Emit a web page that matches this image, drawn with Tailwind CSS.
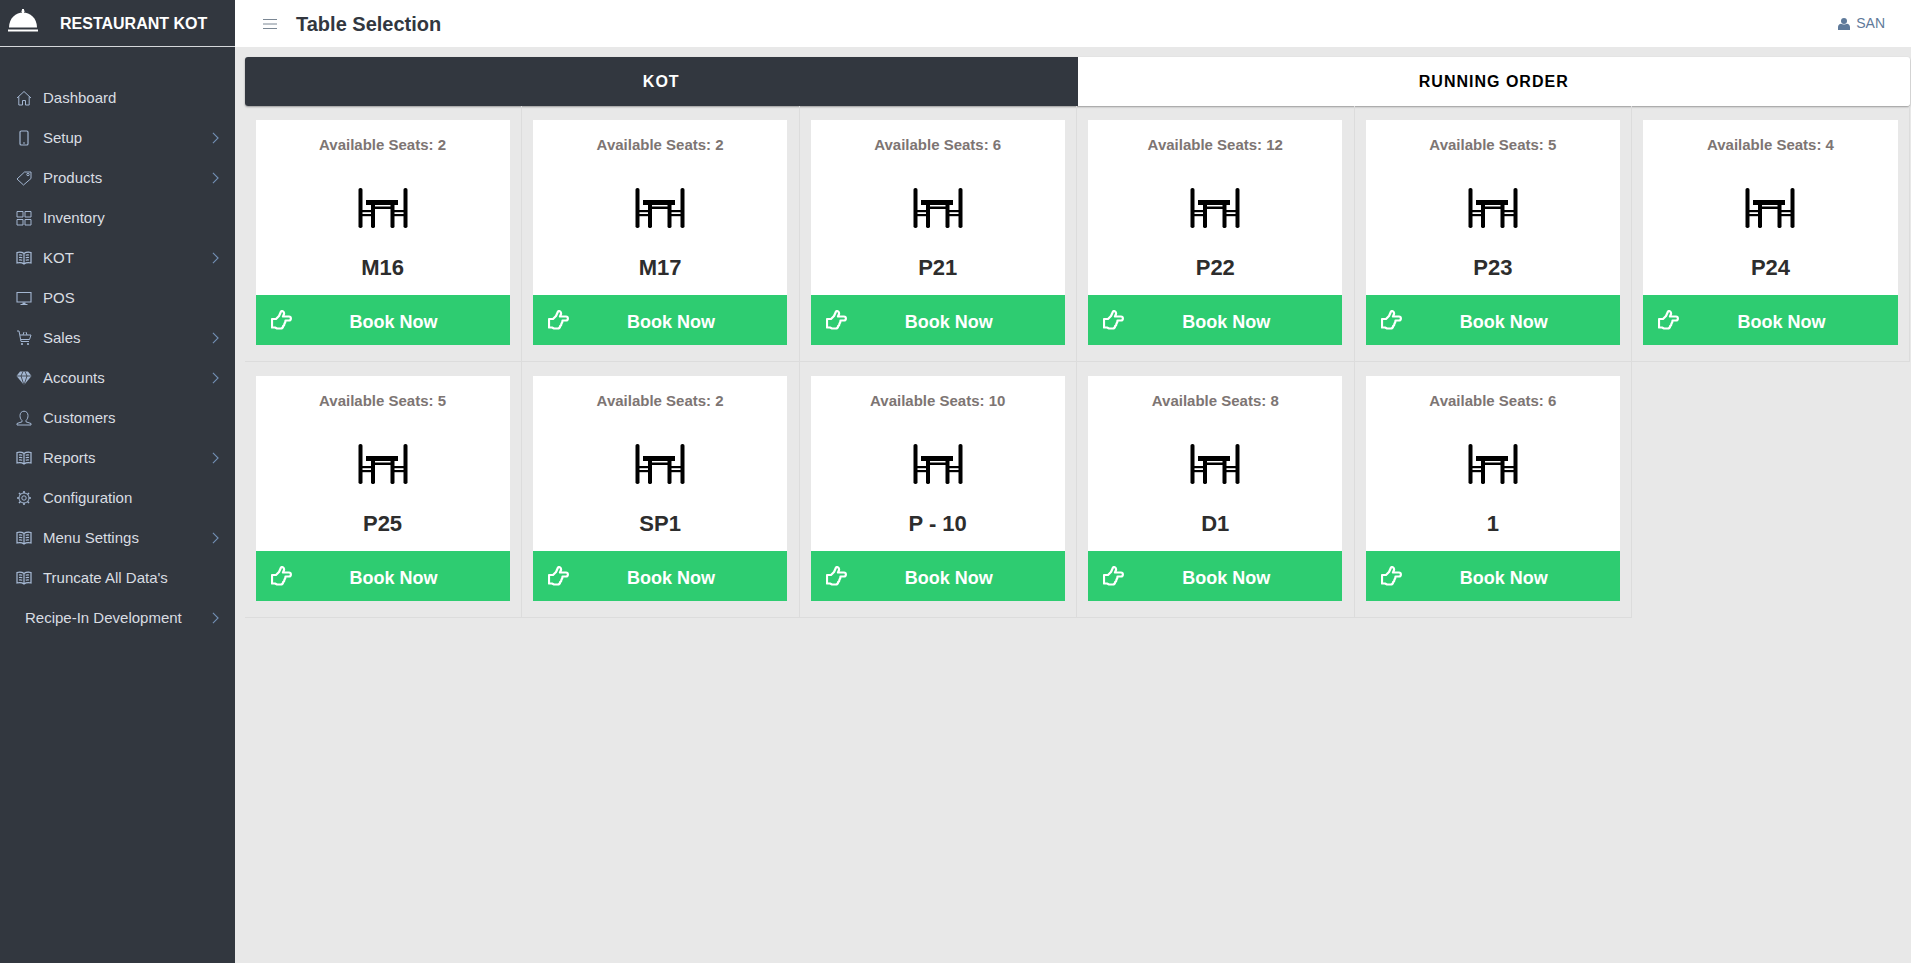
<!DOCTYPE html>
<html lang="en">
<head>
    <meta charset="UTF-8">
    <meta name="viewport" content="width=device-width, initial-scale=1.0">
    <title>Table Selection - Restaurant KOT</title>
    <script src="https://cdn.jsdelivr.net/npm/@tailwindcss/browser@4"></script>
</head>
<body class="bg-[#e8e8e8] font-['Liberation_Sans',Arial,sans-serif]">

    <!-- Shared icons -->
    <svg class="hidden">
        <symbol id="i-table" viewBox="0 0 54 42">
            <rect x="2.500" y="1" width="4" height="40" rx="1.800" fill="#000"/>
            <rect x="47.500" y="1" width="4" height="40" rx="1.800" fill="#000"/>
            <rect x="10" y="13" width="32" height="5" fill="#000"/>
            <rect x="15" y="19.500" width="22" height="2.500" fill="#000"/>
            <rect x="15" y="15" width="4" height="26" rx="1.400" fill="#000"/>
            <rect x="34.500" y="15" width="4" height="26" rx="1.400" fill="#000"/>
            <rect x="6" y="23" width="9" height="2.200" fill="#000"/>
            <rect x="6" y="27" width="9" height="2.200" fill="#000"/>
            <rect x="38" y="23" width="10" height="2.200" fill="#000"/>
            <rect x="38" y="27" width="10" height="2.200" fill="#000"/>
        </symbol>
        <symbol id="i-hand" viewBox="0 0 22 20">
            <path d="M1 9h4l3-3 2-4.500c1-1 3.500 0 3 2.500l-1 2.500h6c2.500 0 2.500 4 0 4h-3.500c0 2-.5 2.500-1 3 0 1.500-.5 2-1.300 2.500-.2 1.500-1 2.500-2.500 2.500H6l-2-1H1z" fill="none" stroke="#fff" stroke-width="2.200" stroke-linejoin="round"/>
        </symbol>
        <symbol id="i-book" viewBox="0 0 16 16">
            <path d="M8 3.500C6 2 3.500 2 1 2.500v10.500c2.500-.5 5-.5 7 1 2-1.500 4.500-1.500 7-1V2.500C12.500 2 10 2 8 3.500zM8 3.500V14M3 5c1-.2 2.200-.2 3.300.2M3 7.500c1-.2 2.200-.2 3.300.2M3 10c1-.2 2.200-.2 3.300.2M13 5c-1-.2-2.200-.2-3.300.2M13 7.500c-1-.2-2.200-.2-3.300.2M13 10c-1-.2-2.200-.2-3.300.2" fill="none" stroke="#a9bcd8" stroke-width="1.200"/>
        </symbol>
        <symbol id="i-chev" viewBox="0 0 8 14">
            <path d="M1 1l6 6-6 6" fill="none" stroke="#7390b5" stroke-width="1.300"/>
        </symbol>
    </svg>

    <div class="flex min-h-[963px]">

        <!-- Sidebar -->
        <aside class="w-[235px] shrink-0 bg-[#32373f]">
            <div class="h-[47px] flex items-center border-b border-[#d5d7da]">
                <svg class="w-[32px] h-[28px] ml-[7px]" viewBox="0 0 32 28">
                    <rect x="15" y="0" width="2" height="4" fill="#fff"/>
                    <rect x="14.500" y="1.500" width="3" height="1.500" fill="#fff"/>
                    <path d="M2 18.500C2 9 9 3.500 16 3.500S30 9 30 18.500z" fill="#fff"/>
                    <rect x="1" y="20.500" width="30" height="2" fill="#fff"/>
                </svg>
                <span class="ml-[21px] pt-px text-[16px] font-bold text-white">RESTAURANT KOT</span>
            </div>

            <nav class="pt-[31px] text-[15px] text-[#d9dde2]">
                <a class="h-[40px] flex items-center pl-[16px] pr-[16px]">
                    <svg class="w-[16px] h-[16px] mr-[11px]" viewBox="0 0 16 16"><path d="M1 8l7-6.500L15 8M2.800 6.500V15h3.700v-4.500h3V15h3.700V6.500" fill="none" stroke="#a3b6d1" stroke-width="1"/></svg>
                    <span>Dashboard</span>
                </a>
                <a class="h-[40px] flex items-center pl-[16px] pr-[16px]">
                    <svg class="w-[16px] h-[16px] mr-[11px]" viewBox="0 0 16 16"><rect x="4" y="1" width="8" height="14" rx="1.300" fill="none" stroke="#a3b6d1" stroke-width="1.200"/><rect x="7.300" y="12.300" width="1.400" height="1.400" fill="#a3b6d1"/></svg>
                    <span>Setup</span>
                    <svg class="w-[7px] h-[12px] ml-auto"><use href="#i-chev"/></svg>
                </a>
                <a class="h-[40px] flex items-center pl-[16px] pr-[16px]">
                    <svg class="w-[16px] h-[16px] mr-[11px]" viewBox="0 0 16 16"><path d="M1 9l7.500-7H15v6.500L7.500 15z" fill="none" stroke="#a3b6d1" stroke-width="1"/><circle cx="12" cy="4.500" r="1.200" fill="none" stroke="#a3b6d1"/></svg>
                    <span>Products</span>
                    <svg class="w-[7px] h-[12px] ml-auto"><use href="#i-chev"/></svg>
                </a>
                <a class="h-[40px] flex items-center pl-[16px] pr-[16px]">
                    <svg class="w-[16px] h-[16px] mr-[11px]" viewBox="0 0 16 16"><path d="M1 1.500h6v5.500H1zM9 1.500h6v5.500H9zM1 9.500h6V15H1zM9 9.500h6V15H9z" fill="none" stroke="#a3b6d1" stroke-width="1"/></svg>
                    <span>Inventory</span>
                </a>
                <a class="h-[40px] flex items-center pl-[16px] pr-[16px]">
                    <svg class="w-[16px] h-[16px] mr-[11px]"><use href="#i-book"/></svg>
                    <span>KOT</span>
                    <svg class="w-[7px] h-[12px] ml-auto"><use href="#i-chev"/></svg>
                </a>
                <a class="h-[40px] flex items-center pl-[16px] pr-[16px]">
                    <svg class="w-[16px] h-[16px] mr-[11px]" viewBox="0 0 16 16"><path d="M1 2.500h14v9.500H1z" fill="none" stroke="#a3b6d1" stroke-width="1.100"/><path d="M6.500 12.500h3v1.500h2v1h-7v-1h2z" fill="#a3b6d1"/></svg>
                    <span>POS</span>
                </a>
                <a class="h-[40px] flex items-center pl-[16px] pr-[16px]">
                    <svg class="w-[16px] h-[16px] mr-[11px]" viewBox="0 0 16 16"><path d="M1 1h2l2 10.500h8M4 5h11l-1.500 4.500h-8.500M7 5l1-3M11 5l-1-3" fill="none" stroke="#a3b6d1" stroke-width="1"/><circle cx="6" cy="14" r="1.100" fill="#a3b6d1"/><circle cx="12" cy="14" r="1.100" fill="#a3b6d1"/></svg>
                    <span>Sales</span>
                    <svg class="w-[7px] h-[12px] ml-auto"><use href="#i-chev"/></svg>
                </a>
                <a class="h-[40px] flex items-center pl-[16px] pr-[16px]">
                    <svg class="w-[16px] h-[16px] mr-[11px]" viewBox="0 0 16 16"><path d="M4 1.500h8L15.500 6 8 15 .5 6z" fill="#a3b6d1"/><path d="M.5 6h15M5 6l3 9 3-9M5 6l2-4.500M11 6L9 1.500" fill="none" stroke="#32373f" stroke-width=".8"/></svg>
                    <span>Accounts</span>
                    <svg class="w-[7px] h-[12px] ml-auto"><use href="#i-chev"/></svg>
                </a>
                <a class="h-[40px] flex items-center pl-[16px] pr-[16px]">
                    <svg class="w-[16px] h-[16px] mr-[11px]" viewBox="0 0 16 16"><path d="M6 10.500C4.500 9 4 7.500 4 5.500 4 3 5.700 1.200 8 1.200s4 1.800 4 4.300c0 2-.5 3.500-2 5v1.300l5 1.700v1.500H1v-1.500l5-1.700z" fill="none" stroke="#a3b6d1" stroke-width="1"/></svg>
                    <span>Customers</span>
                </a>
                <a class="h-[40px] flex items-center pl-[16px] pr-[16px]">
                    <svg class="w-[16px] h-[16px] mr-[11px]"><use href="#i-book"/></svg>
                    <span>Reports</span>
                    <svg class="w-[7px] h-[12px] ml-auto"><use href="#i-chev"/></svg>
                </a>
                <a class="h-[40px] flex items-center pl-[16px] pr-[16px]">
                    <svg class="w-[16px] h-[16px] mr-[11px]" viewBox="0 0 16 16"><circle cx="8" cy="8" r="2.200" fill="none" stroke="#a3b6d1"/><circle cx="8" cy="8" r="5" fill="none" stroke="#a3b6d1"/><path d="M8 1v2M8 13v2M1 8h2M13 8h2M3 3l1.500 1.500M11.500 11.500L13 13M3 13l1.500-1.500M11.500 4.500L13 3" stroke="#a3b6d1" stroke-width="1.600"/></svg>
                    <span>Configuration</span>
                </a>
                <a class="h-[40px] flex items-center pl-[16px] pr-[16px]">
                    <svg class="w-[16px] h-[16px] mr-[11px]"><use href="#i-book"/></svg>
                    <span>Menu Settings</span>
                    <svg class="w-[7px] h-[12px] ml-auto"><use href="#i-chev"/></svg>
                </a>
                <a class="h-[40px] flex items-center pl-[16px] pr-[16px]">
                    <svg class="w-[16px] h-[16px] mr-[11px]"><use href="#i-book"/></svg>
                    <span>Truncate All Data's</span>
                </a>
                <a class="h-[40px] flex items-center pl-[25px] pr-[16px]">
                    <span>Recipe-In Development</span>
                    <svg class="w-[7px] h-[12px] ml-auto"><use href="#i-chev"/></svg>
                </a>
            </nav>
        </aside>

        <div class="flex-1 min-w-0">
            <!-- Top bar -->
            <header class="h-[47px] bg-white flex items-center pl-[28px] pr-[26px]">
                <svg class="w-[14px] h-[12px]" viewBox="0 0 14 12"><path d="M0 1.500h14M0 6h14M0 10.500h14" stroke="#7b8794" stroke-width="1"/></svg>
                <h1 class="ml-[19px] pt-px text-[20px] font-bold text-[#32373f]">Table Selection</h1>
                <div class="ml-auto flex items-center text-[14px] text-[#5f7a9a]">
                    <svg class="w-[12px] h-[12px] mr-[6px]" viewBox="0 0 12 12"><circle cx="6" cy="3" r="3" fill="#5f7a9a"/><path d="M0 12V9c0-2 1.500-3 3-3.200 1.800 1 4.200 1 6 0C10.500 6 12 7 12 9v3z" fill="#5f7a9a"/></svg>
                    <span>SAN</span>
                </div>
            </header>

            <main class="pt-[10px] pl-[10px] pr-[1px]">
                <!-- Tabs -->
                <div class="grid grid-cols-2 h-[49px] rounded-[3px] overflow-hidden shadow-[0_1px_2px_rgba(0,0,0,0.35)] text-[16px] font-bold tracking-[1px]">
                    <div class="bg-[#32373f] text-white flex items-center justify-center">KOT</div>
                    <div class="bg-white text-black flex items-center justify-center">RUNNING ORDER</div>
                </div>

                <!-- Table cards -->
                <div class="grid grid-cols-6 ml-[-0.5px]">
                    <div class="border-r border-b border-[#dcdcdc] pt-[14px] pb-[16px] pl-[11px] pr-[11.5px]">
                        <div class="bg-white h-[225px] flex flex-col items-center">
                            <p class="mt-[15px] text-[15px] leading-[20px] font-bold text-[#7d7573]">Available Seats: 2</p>
                            <svg class="w-[54px] h-[42px] mt-[32px]"><use href="#i-table"/></svg>
                            <p class="mt-[26px] text-[22px] leading-[25px] font-bold text-[#2d2d2d]">M16</p>
                            <div class="mt-auto w-full h-[50px] bg-[#2ecc71] flex items-center relative text-white">
                                <svg class="absolute left-[15px] top-[15px] w-[22px] h-[20px]"><use href="#i-hand"/></svg>
                                <span class="w-full pl-[22px] pt-[4px] text-center text-[18px] font-bold">Book Now</span>
                            </div>
                        </div>
                    </div>
                    <div class="border-r border-b border-[#dcdcdc] pt-[14px] pb-[16px] pl-[11px] pr-[11.5px]">
                        <div class="bg-white h-[225px] flex flex-col items-center">
                            <p class="mt-[15px] text-[15px] leading-[20px] font-bold text-[#7d7573]">Available Seats: 2</p>
                            <svg class="w-[54px] h-[42px] mt-[32px]"><use href="#i-table"/></svg>
                            <p class="mt-[26px] text-[22px] leading-[25px] font-bold text-[#2d2d2d]">M17</p>
                            <div class="mt-auto w-full h-[50px] bg-[#2ecc71] flex items-center relative text-white">
                                <svg class="absolute left-[15px] top-[15px] w-[22px] h-[20px]"><use href="#i-hand"/></svg>
                                <span class="w-full pl-[22px] pt-[4px] text-center text-[18px] font-bold">Book Now</span>
                            </div>
                        </div>
                    </div>
                    <div class="border-r border-b border-[#dcdcdc] pt-[14px] pb-[16px] pl-[11px] pr-[11.5px]">
                        <div class="bg-white h-[225px] flex flex-col items-center">
                            <p class="mt-[15px] text-[15px] leading-[20px] font-bold text-[#7d7573]">Available Seats: 6</p>
                            <svg class="w-[54px] h-[42px] mt-[32px]"><use href="#i-table"/></svg>
                            <p class="mt-[26px] text-[22px] leading-[25px] font-bold text-[#2d2d2d]">P21</p>
                            <div class="mt-auto w-full h-[50px] bg-[#2ecc71] flex items-center relative text-white">
                                <svg class="absolute left-[15px] top-[15px] w-[22px] h-[20px]"><use href="#i-hand"/></svg>
                                <span class="w-full pl-[22px] pt-[4px] text-center text-[18px] font-bold">Book Now</span>
                            </div>
                        </div>
                    </div>
                    <div class="border-r border-b border-[#dcdcdc] pt-[14px] pb-[16px] pl-[11px] pr-[11.5px]">
                        <div class="bg-white h-[225px] flex flex-col items-center">
                            <p class="mt-[15px] text-[15px] leading-[20px] font-bold text-[#7d7573]">Available Seats: 12</p>
                            <svg class="w-[54px] h-[42px] mt-[32px]"><use href="#i-table"/></svg>
                            <p class="mt-[26px] text-[22px] leading-[25px] font-bold text-[#2d2d2d]">P22</p>
                            <div class="mt-auto w-full h-[50px] bg-[#2ecc71] flex items-center relative text-white">
                                <svg class="absolute left-[15px] top-[15px] w-[22px] h-[20px]"><use href="#i-hand"/></svg>
                                <span class="w-full pl-[22px] pt-[4px] text-center text-[18px] font-bold">Book Now</span>
                            </div>
                        </div>
                    </div>
                    <div class="border-r border-b border-[#dcdcdc] pt-[14px] pb-[16px] pl-[11px] pr-[11.5px]">
                        <div class="bg-white h-[225px] flex flex-col items-center">
                            <p class="mt-[15px] text-[15px] leading-[20px] font-bold text-[#7d7573]">Available Seats: 5</p>
                            <svg class="w-[54px] h-[42px] mt-[32px]"><use href="#i-table"/></svg>
                            <p class="mt-[26px] text-[22px] leading-[25px] font-bold text-[#2d2d2d]">P23</p>
                            <div class="mt-auto w-full h-[50px] bg-[#2ecc71] flex items-center relative text-white">
                                <svg class="absolute left-[15px] top-[15px] w-[22px] h-[20px]"><use href="#i-hand"/></svg>
                                <span class="w-full pl-[22px] pt-[4px] text-center text-[18px] font-bold">Book Now</span>
                            </div>
                        </div>
                    </div>
                    <div class="border-r border-b border-[#dcdcdc] pt-[14px] pb-[16px] pl-[11px] pr-[11.5px]">
                        <div class="bg-white h-[225px] flex flex-col items-center">
                            <p class="mt-[15px] text-[15px] leading-[20px] font-bold text-[#7d7573]">Available Seats: 4</p>
                            <svg class="w-[54px] h-[42px] mt-[32px]"><use href="#i-table"/></svg>
                            <p class="mt-[26px] text-[22px] leading-[25px] font-bold text-[#2d2d2d]">P24</p>
                            <div class="mt-auto w-full h-[50px] bg-[#2ecc71] flex items-center relative text-white">
                                <svg class="absolute left-[15px] top-[15px] w-[22px] h-[20px]"><use href="#i-hand"/></svg>
                                <span class="w-full pl-[22px] pt-[4px] text-center text-[18px] font-bold">Book Now</span>
                            </div>
                        </div>
                    </div>

                    <div class="border-r border-b border-[#dcdcdc] pt-[14px] pb-[16px] pl-[11px] pr-[11.5px]">
                        <div class="bg-white h-[225px] flex flex-col items-center">
                            <p class="mt-[15px] text-[15px] leading-[20px] font-bold text-[#7d7573]">Available Seats: 5</p>
                            <svg class="w-[54px] h-[42px] mt-[32px]"><use href="#i-table"/></svg>
                            <p class="mt-[26px] text-[22px] leading-[25px] font-bold text-[#2d2d2d]">P25</p>
                            <div class="mt-auto w-full h-[50px] bg-[#2ecc71] flex items-center relative text-white">
                                <svg class="absolute left-[15px] top-[15px] w-[22px] h-[20px]"><use href="#i-hand"/></svg>
                                <span class="w-full pl-[22px] pt-[4px] text-center text-[18px] font-bold">Book Now</span>
                            </div>
                        </div>
                    </div>
                    <div class="border-r border-b border-[#dcdcdc] pt-[14px] pb-[16px] pl-[11px] pr-[11.5px]">
                        <div class="bg-white h-[225px] flex flex-col items-center">
                            <p class="mt-[15px] text-[15px] leading-[20px] font-bold text-[#7d7573]">Available Seats: 2</p>
                            <svg class="w-[54px] h-[42px] mt-[32px]"><use href="#i-table"/></svg>
                            <p class="mt-[26px] text-[22px] leading-[25px] font-bold text-[#2d2d2d]">SP1</p>
                            <div class="mt-auto w-full h-[50px] bg-[#2ecc71] flex items-center relative text-white">
                                <svg class="absolute left-[15px] top-[15px] w-[22px] h-[20px]"><use href="#i-hand"/></svg>
                                <span class="w-full pl-[22px] pt-[4px] text-center text-[18px] font-bold">Book Now</span>
                            </div>
                        </div>
                    </div>
                    <div class="border-r border-b border-[#dcdcdc] pt-[14px] pb-[16px] pl-[11px] pr-[11.5px]">
                        <div class="bg-white h-[225px] flex flex-col items-center">
                            <p class="mt-[15px] text-[15px] leading-[20px] font-bold text-[#7d7573]">Available Seats: 10</p>
                            <svg class="w-[54px] h-[42px] mt-[32px]"><use href="#i-table"/></svg>
                            <p class="mt-[26px] text-[22px] leading-[25px] font-bold text-[#2d2d2d]">P - 10</p>
                            <div class="mt-auto w-full h-[50px] bg-[#2ecc71] flex items-center relative text-white">
                                <svg class="absolute left-[15px] top-[15px] w-[22px] h-[20px]"><use href="#i-hand"/></svg>
                                <span class="w-full pl-[22px] pt-[4px] text-center text-[18px] font-bold">Book Now</span>
                            </div>
                        </div>
                    </div>
                    <div class="border-r border-b border-[#dcdcdc] pt-[14px] pb-[16px] pl-[11px] pr-[11.5px]">
                        <div class="bg-white h-[225px] flex flex-col items-center">
                            <p class="mt-[15px] text-[15px] leading-[20px] font-bold text-[#7d7573]">Available Seats: 8</p>
                            <svg class="w-[54px] h-[42px] mt-[32px]"><use href="#i-table"/></svg>
                            <p class="mt-[26px] text-[22px] leading-[25px] font-bold text-[#2d2d2d]">D1</p>
                            <div class="mt-auto w-full h-[50px] bg-[#2ecc71] flex items-center relative text-white">
                                <svg class="absolute left-[15px] top-[15px] w-[22px] h-[20px]"><use href="#i-hand"/></svg>
                                <span class="w-full pl-[22px] pt-[4px] text-center text-[18px] font-bold">Book Now</span>
                            </div>
                        </div>
                    </div>
                    <div class="border-r border-b border-[#dcdcdc] pt-[14px] pb-[16px] pl-[11px] pr-[11.5px]">
                        <div class="bg-white h-[225px] flex flex-col items-center">
                            <p class="mt-[15px] text-[15px] leading-[20px] font-bold text-[#7d7573]">Available Seats: 6</p>
                            <svg class="w-[54px] h-[42px] mt-[32px]"><use href="#i-table"/></svg>
                            <p class="mt-[26px] text-[22px] leading-[25px] font-bold text-[#2d2d2d]">1</p>
                            <div class="mt-auto w-full h-[50px] bg-[#2ecc71] flex items-center relative text-white">
                                <svg class="absolute left-[15px] top-[15px] w-[22px] h-[20px]"><use href="#i-hand"/></svg>
                                <span class="w-full pl-[22px] pt-[4px] text-center text-[18px] font-bold">Book Now</span>
                            </div>
                        </div>
                    </div>
                </div>
            </main>
        </div>
    </div>

</body>
</html>
